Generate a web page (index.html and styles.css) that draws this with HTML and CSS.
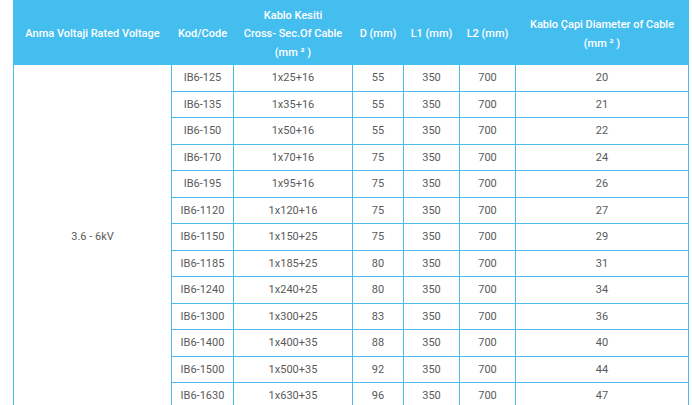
FILE: index.html
```html
<!DOCTYPE html>
<html lang="tr">
<head>
<meta charset="utf-8">
<title>Kablo Tablosu</title>
<link rel="stylesheet" href="styles.css">
</head>
<body>
<div class="wrap">
<table class="spec">
<colgroup>
<col class="c1"><col class="c2"><col class="c3"><col class="c4"><col class="c5"><col class="c6"><col class="c7">
</colgroup>
<thead>
<tr>
<th>Anma Voltaji Rated Voltage</th>
<th>Kod/Code</th>
<th>Kablo Kesiti<br>Cross- Sec.Of Cable<br>(mm ² )</th>
<th>D (mm)</th>
<th>L1 (mm)</th>
<th>L2 (mm)</th>
<th>Kablo Çapi Diameter of Cable<br>(mm ² )</th>
</tr>
</thead>
<tbody>
<tr><td rowspan="13">3.6 - 6kV</td><td>IB6-125</td><td>1x25+16</td><td>55</td><td>350</td><td>700</td><td>20</td></tr>
<tr><td>IB6-135</td><td>1x35+16</td><td>55</td><td>350</td><td>700</td><td>21</td></tr>
<tr><td>IB6-150</td><td>1x50+16</td><td>55</td><td>350</td><td>700</td><td>22</td></tr>
<tr><td>IB6-170</td><td>1x70+16</td><td>75</td><td>350</td><td>700</td><td>24</td></tr>
<tr><td>IB6-195</td><td>1x95+16</td><td>75</td><td>350</td><td>700</td><td>26</td></tr>
<tr><td>IB6-1120</td><td>1x120+16</td><td>75</td><td>350</td><td>700</td><td>27</td></tr>
<tr><td>IB6-1150</td><td>1x150+25</td><td>75</td><td>350</td><td>700</td><td>29</td></tr>
<tr><td>IB6-1185</td><td>1x185+25</td><td>80</td><td>350</td><td>700</td><td>31</td></tr>
<tr><td>IB6-1240</td><td>1x240+25</td><td>80</td><td>350</td><td>700</td><td>34</td></tr>
<tr><td>IB6-1300</td><td>1x300+25</td><td>83</td><td>350</td><td>700</td><td>36</td></tr>
<tr><td>IB6-1400</td><td>1x400+35</td><td>88</td><td>350</td><td>700</td><td>40</td></tr>
<tr><td>IB6-1500</td><td>1x500+35</td><td>92</td><td>350</td><td>700</td><td>44</td></tr>
<tr><td>IB6-1630</td><td>1x630+35</td><td>96</td><td>350</td><td>700</td><td>47</td></tr>
</tbody>
</table>
</div>
</body>
</html>
```
FILE: styles.css
```css
html, body {
  margin: 0;
  padding: 0;
  background: #ffffff;
}
.wrap {
  padding-left: 13px;
}
.spec {
  border-collapse: collapse;
  table-layout: fixed;
  width: 675px;
  font-family: Roboto, "Liberation Sans", sans-serif;
  font-size: 11px;
}
.c1 { width: 158px; }
.c2 { width: 62px; }
.c3 { width: 119px; }
.c4 { width: 51px; }
.c5 { width: 56px; }
.c6 { width: 56px; }
.c7 { width: 173px; }
.spec th {
  background: #44bdef;
  color: #ffffff;
  font-weight: 500;
  line-height: 18.5px;
  height: 59px;
  padding: 4px 0 0;
  text-align: center;
  vertical-align: middle;
  border: 1px solid #44bdef;
}
.spec td {
  color: #5a5a5a;
  font-weight: 400;
  text-align: center;
  vertical-align: middle;
  height: 25.5px;
  padding: 0;
  border: 1px solid #4cbbea;
}
```
